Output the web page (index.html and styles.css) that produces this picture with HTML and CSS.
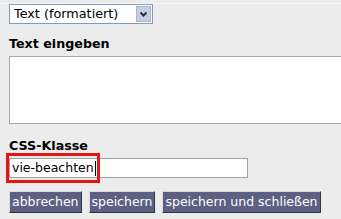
FILE: index.html
```html
<!DOCTYPE html>
<html>
<head>
<meta charset="utf-8">
<link rel="stylesheet" href="styles.css">
</head>
<body>
<div class="page">
  <div class="topline"></div>
  <div class="select">
    <span class="select-text">Text (formatiert)</span>
    <span class="select-btn"><svg width="13" height="14" viewBox="0 0 13 14"><polyline points="3.5,5.5 6.5,8.5 9.5,5.5" fill="none" stroke="#2b2f3a" stroke-width="2"/></svg></span>
  </div>
  <div class="label label-text">Text eingeben</div>
  <div class="textarea"></div>
  <div class="label label-css">CSS-Klasse</div>
  <div class="field-wrap">
    <div class="input"><span class="value">vie-beachten</span><span class="caret"></span></div>
    <div class="highlight"></div>
  </div>
  <div class="buttons">
    <button class="btn">abbrechen</button>
    <button class="btn">speichern</button>
    <button class="btn">speichern und schließen</button>
  </div>
</div>
</body>
</html>
```
FILE: styles.css
```css
html, body {
  margin: 0;
  padding: 0;
  overflow: hidden;
  background: #ececec;
}
body {
  width: 341px;
  height: 219px;
  font-family: "DejaVu Sans", Verdana, sans-serif;
  font-size: 12.5px;
  color: #000;
}
.page {
  padding: 3px 0 0 9px;
}
.topline {
  height: 1px;
  margin-left: -9px;
  width: 341px;
  background: #f6f6f6;
}
.select {
  display: flex;
  align-items: center;
  box-sizing: border-box;
  width: 144px;
  height: 20px;
  border: 1px solid #7f9db9;
  background: #fff;
}
.select-text {
  flex: 1;
  padding-left: 4px;
  font-size: 12.8px;
  line-height: 18px;
}
.select-btn {
  display: flex;
  align-items: center;
  justify-content: center;
  box-sizing: border-box;
  width: 15px;
  height: 16px;
  margin-right: 1px;
  background: #c6cedf;
  border: 1px solid #a9b3c9;
}
.label {
  font-weight: bold;
  font-size: 12.7px;
  line-height: 15px;
}
.label-text {
  margin-top: 12px;
}
.textarea {
  margin-top: 5px;
  box-sizing: border-box;
  width: 345px;
  height: 68px;
  background: #fff;
  border: 1px solid #a8a8a8;
}
.label-css {
  margin-top: 14px;
}
.field-wrap {
  position: relative;
  margin-top: 5px;
  width: 239px;
}
.input {
  display: flex;
  align-items: center;
  box-sizing: border-box;
  height: 20px;
  padding-left: 2px;
  background: #fff;
  border: 1px solid #a2a2a2;
  line-height: 18px;
}
.caret {
  width: 1px;
  height: 15px;
  margin-left: 1px;
  background: #000;
}
.highlight {
  position: absolute;
  left: -3px;
  top: -5px;
  width: 94px;
  height: 30px;
  box-sizing: border-box;
  border: 3px solid #e81414;
}
.buttons {
  display: flex;
  gap: 7px;
  margin-top: 13px;
}
.btn {
  margin: 0;
  height: 22px;
  padding: 0 2px;
  font-family: inherit;
  font-size: 12.5px;
  line-height: 20px;
  color: #fff;
  background: #5c6183;
  border: 1px solid;
  border-color: #d9dbe4 #30323f #30323f #d9dbe4;
  border-radius: 0;
}
```
